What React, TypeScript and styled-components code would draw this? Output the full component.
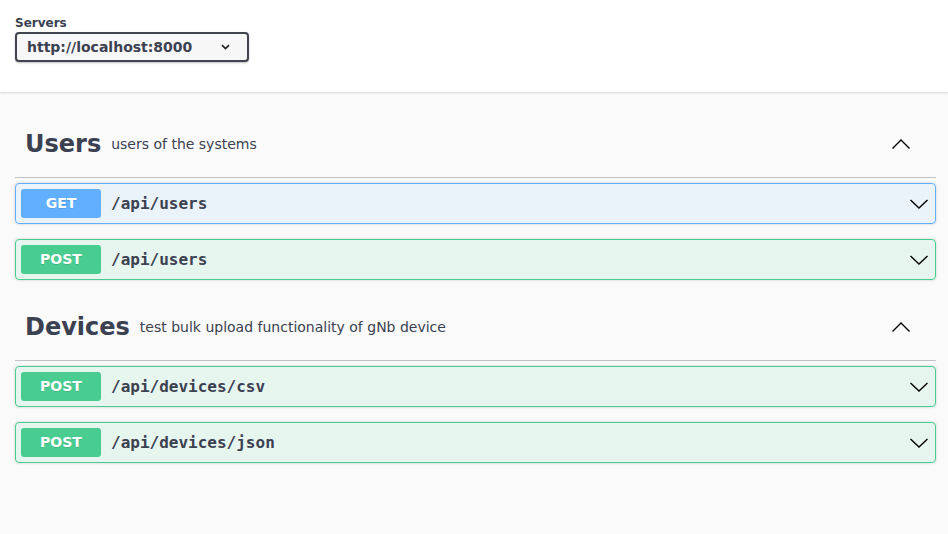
import React from "react";
import styled, { createGlobalStyle } from "styled-components";

const Global = createGlobalStyle`
  html, body { margin: 0; padding: 0; background: #fafafa; }
  body { font-family: "DejaVu Sans", sans-serif; color: #3b4151; }
  #root { min-height: 534px; }
`;

const SchemeContainer = styled.div`
  background: #fff;
  box-shadow: 0 1px 2px 0 rgba(0, 0, 0, 0.15);
  height: 92px;
  box-sizing: border-box;
  padding: 16px 15px 0 15px;
`;

const ServersTitle = styled.div`
  font-size: 12px;
  font-weight: 700;
  line-height: 15px;
  color: #3b4151;
`;

const SelectBox = styled.div`
  margin-top: 1px;
  width: 234px;
  height: 30px;
  box-sizing: border-box;
  border: 2px solid #41444e;
  border-radius: 4px;
  background: #f7f7f7;
  box-shadow: 0 1px 2px 0 rgba(0, 0, 0, 0.25);
  display: flex;
  align-items: center;
  padding: 0 17px 0 10px;
  font-size: 14px;
  font-weight: 700;
  color: #3b4151;
  justify-content: space-between;
`;

const Wrapper = styled.div`
  padding: 20px 12px 0 15px;
  display: flex;
  flex-direction: column;
`;

const TagSection = styled.section`
  display: flex;
  flex-direction: column;
`;

const TagHeader = styled.h3`
  margin: 0 0 5px 0;
  height: 66px;
  box-sizing: border-box;
  padding: 9px 20px 11px 10px;
  border-bottom: 1px solid rgba(59, 65, 81, 0.3);
  display: flex;
  align-items: center;
  font-size: 24px;
  font-weight: 700;
  color: #3b4151;
`;

const TagDesc = styled.small`
  flex: 1;
  padding: 0 10px;
  font-size: 14px;
  font-weight: 400;
  color: #3b4151;
`;

const UpArrow = styled.svg`
  margin-right: 5px;
`;

const method = {
  get: { border: "#61affe", bg: "rgba(97,175,254,.1)" },
  post: { border: "#49cc90", bg: "rgba(73,204,144,.1)" },
};

type M = keyof typeof method;

const Op = styled.div<{ $m: M }>`
  margin: 0 0 15px 0;
  height: 41px;
  box-sizing: border-box;
  border: 1px solid ${(p) => method[p.$m].border};
  background: ${(p) => method[p.$m].bg};
  border-radius: 4px;
  box-shadow: 0 0 3px rgba(0, 0, 0, 0.19);
  display: flex;
  align-items: center;
  padding: 0 6px 0 5px;
`;

const Badge = styled.span<{ $m: M }>`
  min-width: 80px;
  height: 28px;
  border-radius: 3px;
  background: ${(p) => method[p.$m].border};
  color: #fff;
  font-size: 14px;
  font-weight: 700;
  text-align: center;
  text-shadow: 0 1px 0 rgba(0, 0, 0, 0.1);
  display: flex;
  align-items: center;
  justify-content: center;
  padding-bottom: 1px;
`;

const Path = styled.span`
  flex: 1;
  padding: 0 10px;
  font-family: "DejaVu Sans Mono", monospace;
  font-size: 16px;
  font-weight: 700;
  color: #3b4151;
`;

const Chevron = ({ up }: { up?: boolean }) =>
  up ? (
    <UpArrow width="20" height="12" viewBox="0 0 20 12">
      <polyline points="1.5,10.5 10,2 18.5,10.5" fill="none" stroke="#000" strokeWidth="1.4" />
    </UpArrow>
  ) : (
    <svg width="20" height="12" viewBox="0 0 20 12">
      <polyline points="1.5,2 10,10 18.5,2" fill="none" stroke="#000" strokeWidth="1.4" />
    </svg>
  );

const tags: { name: string; desc: string; ops: { m: M; path: string }[] }[] = [
  {
    name: "Users",
    desc: "users of the systems",
    ops: [
      { m: "get", path: "/api/users" },
      { m: "post", path: "/api/users" },
    ],
  },
  {
    name: "Devices",
    desc: "test bulk upload functionality of gNb device",
    ops: [
      { m: "post", path: "/api/devices/csv" },
      { m: "post", path: "/api/devices/json" },
    ],
  },
];

export default function App() {
  return (
    <>
      <Global />
      <SchemeContainer>
        <ServersTitle>Servers</ServersTitle>
        <SelectBox>
          <span>http://localhost:8000</span>
          <svg width="9" height="6" viewBox="0 0 9 6">
            <polyline points="1,1.2 4.5,4.6 8,1.2" fill="none" stroke="#222" strokeWidth="1.7" />
          </svg>
        </SelectBox>
      </SchemeContainer>
      <Wrapper>
        {tags.map((t) => (
          <TagSection key={t.name}>
            <TagHeader>
              <span>{t.name}</span>
              <TagDesc>{t.desc}</TagDesc>
              <Chevron up />
            </TagHeader>
            {t.ops.map((o) => (
              <Op key={o.m + o.path} $m={o.m}>
                <Badge $m={o.m}>{o.m.toUpperCase()}</Badge>
                <Path>{o.path}</Path>
                <Chevron />
              </Op>
            ))}
          </TagSection>
        ))}
      </Wrapper>
    </>
  );
}
